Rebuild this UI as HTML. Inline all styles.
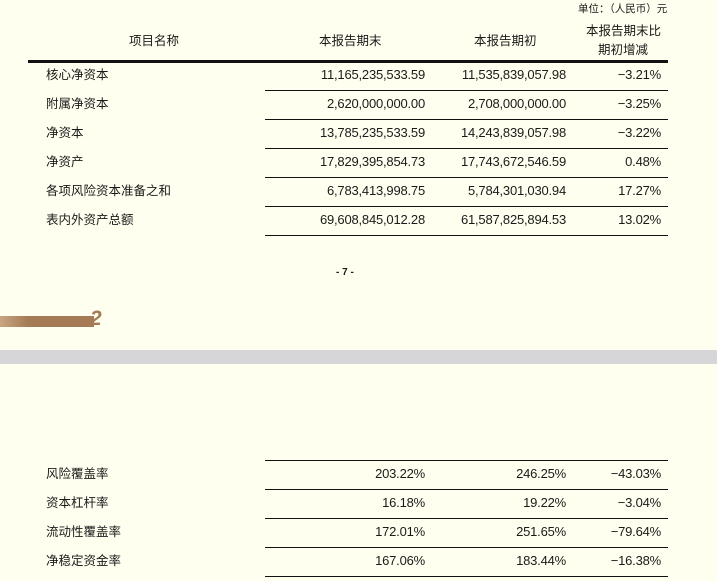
<!DOCTYPE html><html><head><meta charset="utf-8"><style>
body{margin:0;width:717px;height:581px;background:#fffff0;position:relative;overflow:hidden;font-family:"Liberation Sans","Noto Sans CJK SC",sans-serif;color:#1a1a1a;font-size:12.5px}
.t{position:absolute;white-space:nowrap;line-height:14px}
.r{text-align:right;letter-spacing:-0.2px;font-size:13px}
.l{position:absolute;height:1px;background:#111}
</style></head><body>
<div class="t" style="left:578px;top:2px;font-size:10.5px">单位：（人民币）元</div>
<div class="t" style="left:129px;top:34px">项目名称</div>
<div class="t" style="left:319px;top:34px">本报告期末</div>
<div class="t" style="left:474px;top:34px">本报告期初</div>
<div class="t" style="left:586px;top:24px">本报告期末比</div>
<div class="t" style="left:598px;top:43px">期初增减</div>
<div class="l" style="left:28px;top:60px;width:640px;height:3px"></div>
<div id="a"></div>
<div class="t" style="left:336px;top:266px;font-size:10px;font-weight:bold">- 7 -</div>
<div style="position:absolute;left:0;top:316px;width:94px;height:11px;background:linear-gradient(90deg,#c9a583,#a47b55 30%,#a47b55)"></div>
<div class="t" style="left:90px;top:308px;font-size:21px;font-weight:bold;font-style:italic;color:#a47b55;line-height:21px">2</div>
<div style="position:absolute;left:0;top:350px;width:717px;height:14px;background:#d6d6d8"></div>
<script>
function rows(data,y0,first){let h='';data.forEach((d,i)=>{let y=y0+i*29;
h+=`<div class="t" style="left:46px;top:${y+7}px">${d[0]}</div>`;
h+=`<div class="t r" style="right:${717-425}px;top:${y+7}px">${d[1]}</div>`;
h+=`<div class="t r" style="right:${717-566}px;top:${y+7}px">${d[2]}</div>`;
h+=`<div class="t r" style="right:${717-661}px;top:${y+7}px">${d[3].replace('-','−')}</div>`;
h+=`<div class="l" style="left:265px;top:${y+29}px;width:403px"></div>`;});
if(first)h+=`<div class="l" style="left:265px;top:${y0}px;width:403px"></div>`;
return h;}
document.getElementById('a').outerHTML=rows([
['核心净资本','11,165,235,533.59','11,535,839,057.98','-3.21%'],
['附属净资本','2,620,000,000.00','2,708,000,000.00','-3.25%'],
['净资本','13,785,235,533.59','14,243,839,057.98','-3.22%'],
['净资产','17,829,395,854.73','17,743,672,546.59','0.48%'],
['各项风险资本准备之和','6,783,413,998.75','5,784,301,030.94','17.27%'],
['表内外资产总额','69,608,845,012.28','61,587,825,894.53','13.02%']],61,false)+rows([
['风险覆盖率','203.22%','246.25%','-43.03%'],
['资本杠杆率','16.18%','19.22%','-3.04%'],
['流动性覆盖率','172.01%','251.65%','-79.64%'],
['净稳定资金率','167.06%','183.44%','-16.38%']],460,true);
</script>
</body></html>
